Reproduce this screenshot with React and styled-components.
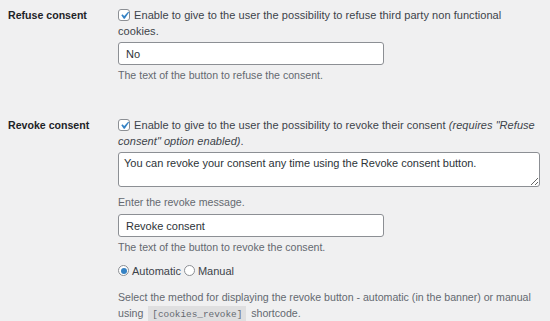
import styled, { createGlobalStyle } from 'styled-components';

const GlobalStyle = createGlobalStyle`
  html, body {
    margin: 0;
    padding: 0;
    background: #f0f0f1;
  }
  body {
    font-family: 'Liberation Sans', Arial, sans-serif;
    font-size: 10.6px;
    line-height: 16px;
    color: #3c434a;
  }
`;

const FormTable = styled.div`
  display: flex;
  flex-direction: column;
  width: 550px;
  padding: 0 10px 0 8px;
  box-sizing: border-box;
`;

const Row = styled.div`
  display: flex;
  padding: 7px 0 26px 0;

  &:last-child {
    padding-bottom: 0;
  }
`;

const RowLabel = styled.div`
  width: 110px;
  flex-shrink: 0;
  font-weight: 700;
  color: #1d2327;
  line-height: 16px;
`;

const Field = styled.div`
  flex: 1;
  display: flex;
  flex-direction: column;
  align-items: flex-start;
`;

const CheckLine = styled.label`
  display: block;
  font-size: 11px;
  letter-spacing: 0.05px;
  line-height: 16px;
`;

const Box = styled.span`
  display: inline-block;
  width: 12px;
  height: 12px;
  box-sizing: border-box;
  border: 1px solid #8c8f94;
  border-radius: 3px;
  background: #fff;
  vertical-align: -2px;
  margin-right: 1px;
  position: relative;

  svg {
    position: absolute;
    left: -2px;
    top: -2px;
    width: 15px;
    height: 15px;
  }
`;

const TextInput = styled.input`
  box-sizing: border-box;
  width: 266px;
  height: 23px;
  margin: ${p => p.$top || 3}px 0 0 0;
  padding: 0 7px;
  border: 1px solid #8c8f94;
  border-radius: 3px;
  background: #fff;
  font-family: inherit;
  font-size: 11px;
  color: #2c3338;
  outline: none;
`;

const TextArea = styled.textarea`
  box-sizing: border-box;
  width: 422px;
  height: 35px;
  margin: 3px 0 0 0;
  padding: 2px 5px;
  border: 1px solid #8c8f94;
  border-radius: 3px;
  background: #fff;
  font-family: inherit;
  font-size: 11px;
  line-height: 16px;
  color: #2c3338;
  resize: vertical;
  outline: none;
`;

const Help = styled.p`
  margin: ${p => p.$top || 2}px 0 0 0;
  color: #646970;
  line-height: 16.5px;
`;

const RadioRow = styled.div`
  display: flex;
  align-items: center;
  margin-top: 7px;
  font-size: 11px;
  line-height: 16px;
`;

const RadioLabel = styled.label`
  display: flex;
  align-items: center;
  gap: 3px;
  margin-right: 3px;
`;

const RadioDot = styled.span`
  display: inline-block;
  width: 11px;
  height: 11px;
  box-sizing: border-box;
  border-radius: 50%;
  border: 1px solid #8c8f94;
  background: #fff;
  position: relative;

  &::after {
    content: '';
    display: ${p => p.$on ? 'block' : 'none'};
    position: absolute;
    left: 1.5px;
    top: 1.5px;
    width: 6px;
    height: 6px;
    border-radius: 50%;
    background: #3582c4;
  }
`;

const Code = styled.code`
  font-family: 'Liberation Mono', 'DejaVu Sans Mono', monospace;
  font-size: 9.4px;
  background: rgba(0, 0, 0, 0.07);
  padding: 3px 4px 2px;
  margin: 0 2px;
`;

function Checkbox() {
  return (
    <Box>
      <svg viewBox="0 0 20 20">
        <path d="M14.83 4.89l1.34.94-5.81 8.38H9.02L5.78 9.67l1.34-1.25 2.57 2.4z" fill="#3582c4" />
      </svg>
    </Box>
  );
}

export default function App() {
  return (
    <>
      <GlobalStyle />
      <FormTable>
        <Row>
          <RowLabel>Refuse consent</RowLabel>
          <Field>
            <CheckLine>
              <Checkbox /> Enable to give to the user the possibility to refuse third party non functional cookies.
            </CheckLine>
            <TextInput defaultValue="No" />
            <Help>The text of the button to refuse the consent.</Help>
          </Field>
        </Row>
        <Row>
          <RowLabel>Revoke consent</RowLabel>
          <Field>
            <CheckLine>
              <Checkbox /> Enable to give to the user the possibility to revoke their consent <i>(requires "Refuse consent" option enabled)</i>.
            </CheckLine>
            <TextArea defaultValue="You can revoke your consent any time using the Revoke consent button." />
            <Help $top={7}>Enter the revoke message.</Help>
            <TextInput $top={4} defaultValue="Revoke consent" />
            <Help>The text of the button to revoke the consent.</Help>
            <RadioRow>
              <RadioLabel><RadioDot $on /> Automatic</RadioLabel>
              <RadioLabel><RadioDot /> Manual</RadioLabel>
            </RadioRow>
            <Help $top={10}>
              Select the method for displaying the revoke button - automatic (in the banner) or manual using <Code>[cookies_revoke]</Code> shortcode.
            </Help>
          </Field>
        </Row>
      </FormTable>
    </>
  );
}
